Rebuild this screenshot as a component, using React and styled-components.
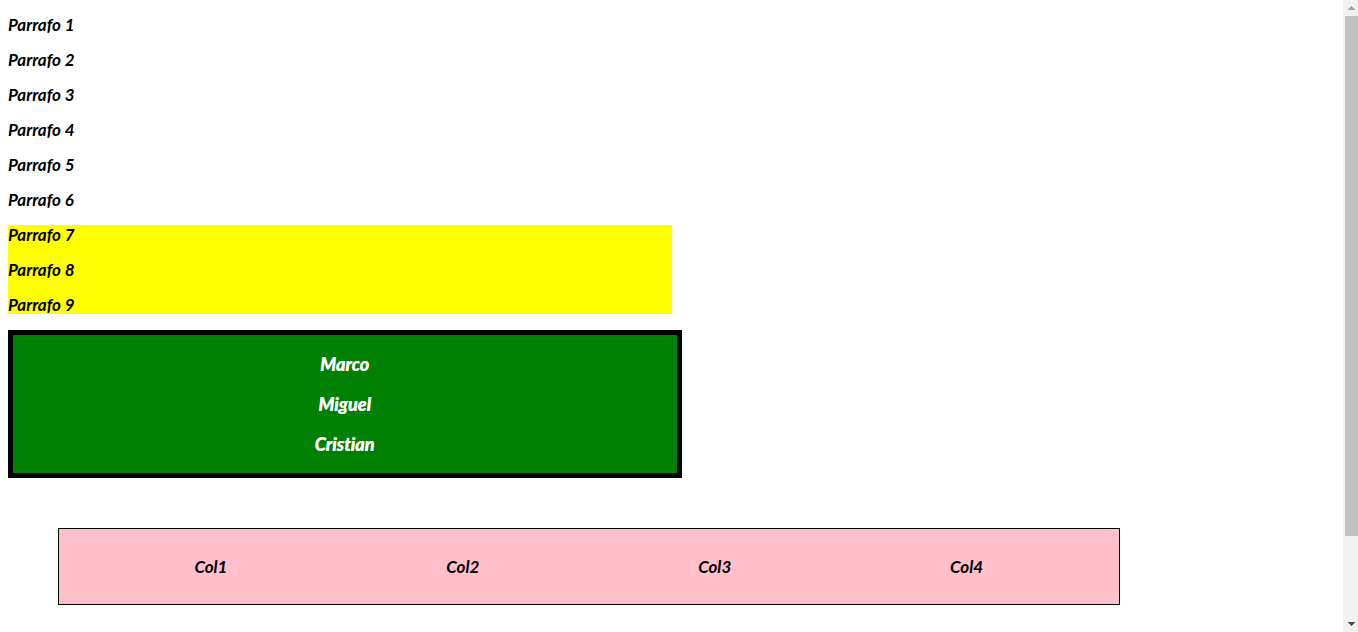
import React from "react";
import styled, { createGlobalStyle } from "styled-components";

const GlobalStyle = createGlobalStyle`
  * { box-sizing: border-box; }
  body {
    margin: 0;
    background: #fff;
    color: #000;
    font: italic 700 17px/19px Lato, "Liberation Sans", sans-serif;
    font-variant-ligatures: none;
  }
`;

const Page = styled.div`
  display: flex;
  height: 100vh;
`;

const Content = styled.main`
  flex: 1;
  min-width: 0;
  padding: 15px 8px 0;
  overflow: hidden;
`;

const Paragraphs = styled.section`
  display: flex;
  flex-direction: column;
  gap: 16px;
  width: ${({ $half }) => ($half ? "50%" : "auto")};
  margin-bottom: 16px;
  background: ${({ $fill }) => $fill || "transparent"};
`;

const Paragraph = styled.p`
  margin: 0;
`;

const Names = styled.section`
  display: flex;
  flex-direction: column;
  gap: 18px;
  width: calc(50% + 10px);
  padding: 18px 0;
  border: 5px solid #000;
  background: green;
  color: #fff;
  text-align: center;
`;

const Name = styled.h3`
  margin: 0;
  font-size: 18px;
  font-weight: 900;
  line-height: 22px;
  text-shadow: 0 0 0 currentColor;
`;

const Columns = styled.section`
  display: grid;
  grid-template-columns: repeat(4, 1fr);
  width: 80%;
  margin: 50px;
  padding: 28px 26px;
  border: 1px solid #000;
  background: pink;
  text-align: center;
`;

const Column = styled.div`
  min-width: 0;
`;

const ScrollBar = styled.aside`
  display: flex;
  flex-direction: column;
  width: 15px;
  background: #f1f1f1;
`;

const ArrowButton = styled.button`
  display: flex;
  align-items: center;
  justify-content: center;
  height: 16px;
  padding: 0 0 0 2px;
  border: 0;
  background: transparent;
  color: ${({ $muted }) => ($muted ? "#a3a3a3" : "#505050")};
`;

const Track = styled.div`
  flex: 1;
  padding-left: 2px;
`;

const Thumb = styled.div`
  height: calc(100% * 13 / 15);
  background: #c1c1c1;
`;

const Arrow = ({ d }) => (
  <svg width="7" height="4" viewBox="0 0 7 4" fill="currentColor" shapeRendering="crispEdges" aria-hidden="true">
    <path d={d} />
  </svg>
);

const intro = [1, 2, 3, 4, 5, 6];
const highlighted = [7, 8, 9];
const names = ["Marco", "Miguel", "Cristian"];
const columns = ["Col1", "Col2", "Col3", "Col4"];

export default function App() {
  return (
    <>
      <GlobalStyle />
      <Page>
        <Content>
          <Paragraphs>
            {intro.map((n) => (
              <Paragraph key={n}>Parrafo {n}</Paragraph>
            ))}
          </Paragraphs>
          <Paragraphs $half $fill="yellow">
            {highlighted.map((n) => (
              <Paragraph key={n}>Parrafo {n}</Paragraph>
            ))}
          </Paragraphs>
          <Names>
            {names.map((name) => (
              <Name key={name}>{name}</Name>
            ))}
          </Names>
          <Columns>
            {columns.map((label) => (
              <Column key={label}>{label}</Column>
            ))}
          </Columns>
        </Content>
        <ScrollBar>
          <ArrowButton type="button" aria-label="Scroll up" $muted>
            <Arrow d="M3 0h1v1h1v1h1v1h1v1H0V3h1V2h1V1h1z" />
          </ArrowButton>
          <Track>
            <Thumb />
          </Track>
          <ArrowButton type="button" aria-label="Scroll down">
            <Arrow d="M0 0h7v1H6v1H5v1H4v1H3V3H2V2H1V1H0z" />
          </ArrowButton>
        </ScrollBar>
      </Page>
    </>
  );
}
